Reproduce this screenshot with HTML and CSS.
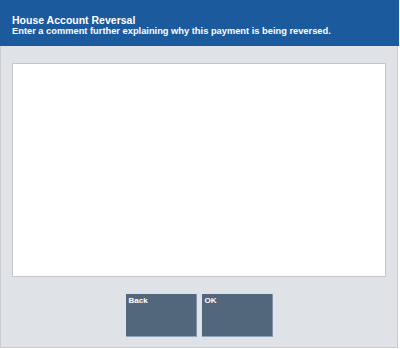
FILE: index.html
```html
<!DOCTYPE html>
<html>
<head>
<meta charset="utf-8">
<link rel="stylesheet" href="styles.css">
</head>
<body>
<div class="screen">
  <div class="header">
    <div class="title">House Account Reversal</div>
    <div class="subtitle">Enter a comment further explaining why this payment is being reversed.</div>
  </div>
  <div class="body">
    <div class="comment"></div>
    <div class="actions">
      <div class="btn">Back</div>
      <div class="btn">OK</div>
    </div>
  </div>
</div>
</body>
</html>
```
FILE: styles.css
```css
html, body {
  margin: 0;
  padding: 0;
  background: #ffffff;
}
.screen {
  width: 399px;
  height: 348px;
  display: flex;
  flex-direction: column;
  font-family: "Liberation Sans", Arial, sans-serif;
}
.header {
  height: 46px;
  box-sizing: border-box;
  background: #1b5a9d;
  color: #ffffff;
  padding: 14px 12px 0 12px;
  font-weight: bold;
}
.title {
  font-size: 10.5px;
  line-height: 12px;
}
.subtitle {
  font-size: 9.3px;
  line-height: 11px;
}
.body {
  flex: 1;
  background: #dfe2e6;
  border: 1px solid #c9cdd2;
  border-top: none;
  margin-right: 1px;
  display: flex;
  flex-direction: column;
  padding: 17px 11px 0 11px;
}
.comment {
  height: 212px;
  background: #ffffff;
  border: 1px solid #c3c7cb;
}
.actions {
  display: flex;
  justify-content: center;
  gap: 5px;
  padding-top: 17px;
}
.btn {
  width: 71px;
  height: 43px;
  box-sizing: border-box;
  background: #52677c;
  border-bottom: 1px solid #8fa3bb;
  border-right: 1px solid #7f93a9;
  color: #ffffff;
  font-size: 8px;
  font-weight: bold;
  padding: 2px 3px;
}
```
